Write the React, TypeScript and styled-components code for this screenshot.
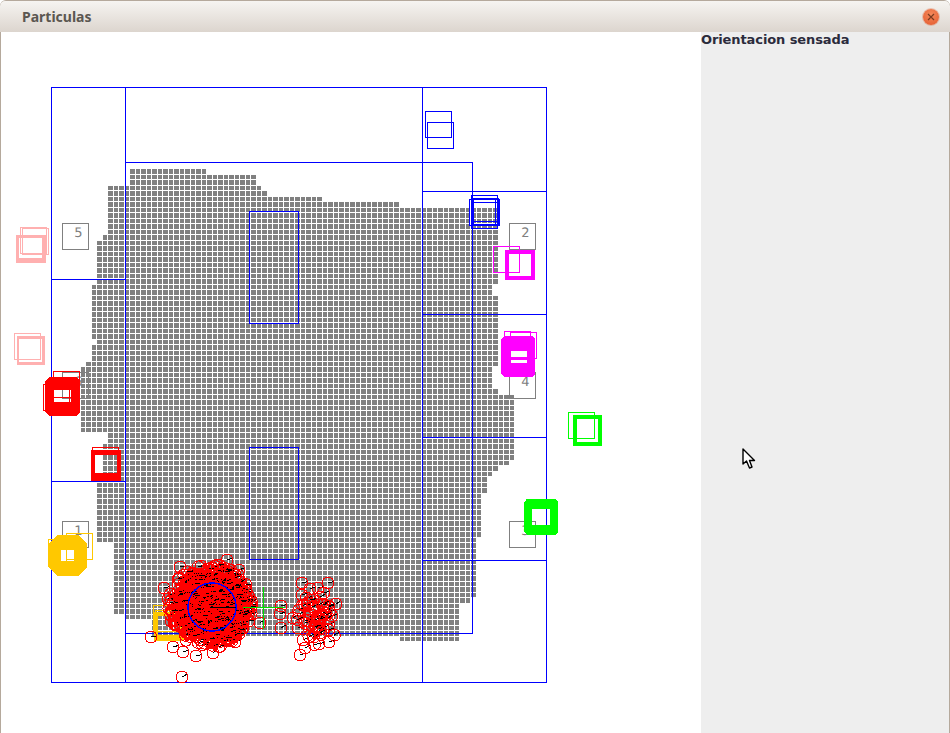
import React from 'react'
import styled, { createGlobalStyle } from 'styled-components'

const GlobalStyle = createGlobalStyle`
  html, body { margin: 0; padding: 0; background: #fff; }
`

const Win = styled.div`
  width: 950px;
  height: 733px;
  display: flex;
  flex-direction: column;
  overflow: hidden;
  position: relative;
  background: #b5a99c;
  border-radius: 6px 6px 0 0;
`
const TitleBar = styled.div`
  height: 31px;
  flex: 0 0 31px;
  margin-top: 1px;
  display: flex;
  align-items: center;
  justify-content: space-between;
  padding: 0 11px 0 22px;
  background: linear-gradient(#f6f4f1, #dcd5ce);
  border-radius: 5px 5px 0 0;
`
const Title = styled.span`
  font: bold 14px "Noto Sans", sans-serif;
  color: #5b5751;
`
const CloseBtn = styled.div`
  width: 16px;
  height: 16px;
  border-radius: 50%;
  background: radial-gradient(circle at 50% 35%, #f58a5c, #e2582c);
  box-shadow: 0 0 0 1px rgba(220, 110, 70, 0.35);
  display: flex;
  align-items: center;
  justify-content: center;
`
const Body = styled.div`
  flex: 1;
  display: flex;
  margin: 0 1px 0 1px;
  min-height: 0;
`
const CanvasPanel = styled.div`
  flex: 0 0 700px;
  background: #fff;
`
const SidePanel = styled.div`
  flex: 1;
  background: #eeeeee;
  position: relative;
`
const SideLabel = styled.div`
  font: bold 13px "DejaVu Sans", sans-serif;
  color: #2b2b3c;
  line-height: 15px;
  letter-spacing: -0.1px;
`
const Cursor = styled.svg`
  position: absolute;
  left: 41px;
  top: 416px;
`
const Drawing = styled.svg`
  display: block;
  shape-rendering: crispEdges;
`
const Outline = styled.rect<{ $c: string }>`
  fill: none;
  stroke: ${p => p.$c};
  stroke-width: 1;
`
const Wall = styled.line`
  stroke: #0000ff;
  stroke-width: 1;
`
const Cells = styled.path`
  fill: #808080;
`
const Band = styled.path<{ $c: string }>`
  fill: ${p => p.$c};
  fill-rule: evenodd;
`
const Tag = styled.text`
  font: 13px "DejaVu Sans", sans-serif;
  fill: #808080;
  text-anchor: middle;
  text-rendering: geometricPrecision;
`
const Particle = styled.circle`
  fill: none;
  stroke: #ff0000;
  stroke-width: 1;
`
const Heading = styled.line`
  stroke: #000;
  stroke-width: 1;
`
const Estimate = styled.circle`
  fill: none;
  stroke: #0000ff;
  stroke-width: 1.5;
`
const Cross = styled.line`
  stroke: #00e000;
  stroke-width: 1;
`

const BLUE = '#0000ff'
const MAGENTA = '#ff00ff'
const GREEN = '#00ff00'
const RED = '#ff0000'
const PINK = '#ffb0b0'
const YELLOW = '#ffc800'

// outline of the occupancy grid, clockwise from the top left
const outline: number[][] = [
  [108, 183], [132, 183], [132, 168], [187, 168], [188, 170], [205, 171], [222, 172], [240, 173], [255, 176], [258, 184],
  [264, 191], [272, 194], [282, 196], [310, 196], [318, 198], [332, 200], [346, 200], [400, 204], [446, 205], [470, 206],
  [495, 208], [499, 212], [499, 280], [494, 284], [494, 296], [501, 300], [501, 348], [496, 360], [494, 372], [494, 390],
  [502, 393], [510, 395], [517, 400], [517, 453], [514, 456], [507, 463], [497, 470], [490, 477], [487, 482], [484, 495],
  [484, 522], [480, 530], [478, 540], [478, 594], [473, 600], [460, 606], [460, 642], [405, 642], [400, 639], [150, 639],
  [150, 622], [138, 622], [130, 618], [115, 614], [115, 582], [111, 578], [111, 544], [95, 543], [95, 486], [98, 480],
  [103, 466], [103, 450], [106, 444], [106, 433], [82, 430], [79, 424], [79, 372], [85, 365], [90, 356], [93, 346],
  [95, 340], [93, 334], [93, 284], [96, 278], [99, 270], [99, 240], [106, 232], [108, 230],
]

const inside = (x: number, y: number) => {
  let hit = false
  for (let i = 0, j = outline.length - 1; i < outline.length; j = i++) {
    const [xi, yi] = outline[i]
    const [xj, yj] = outline[j]
    if (yi > y !== yj > y && x < ((xj - xi) * (y - yi)) / (yj - yi) + xi) hit = !hit
  }
  return hit
}

const cellPath = () => {
  let d = ''
  const pitch = 5.5
  const left = 108 - 6 * pitch
  for (let r = 0; r < 88; r++) {
    for (let c = 0; c < 84; c++) {
      const x0 = Math.round(left + c * pitch)
      const x1 = Math.round(left + (c + 1) * pitch) - 1
      const y0 = Math.round(169 + r * pitch)
      const y1 = Math.round(169 + (r + 1) * pitch) - 1
      if (inside(x0 + 2, y0 + 2)) d += `M${x0} ${y0}H${x1}V${y1}H${x0}Z`
    }
  }
  return d
}

// thick robot footprint: outer box with cut corners and rectangular holes
const band = (x0: number, y0: number, x1: number, y1: number, holes: number[][], cut = 0) =>
  `M${x0 + cut} ${y0}H${x1 - cut}L${x1} ${y0 + cut}V${y1 - cut}L${x1 - cut} ${y1}H${x0 + cut}L${x0} ${y1 - cut}V${y0 + cut}Z` +
  holes.map(([a, b, c, d]) => `M${a} ${b}H${c}V${d}H${a}Z`).join('')

const thin: [number, number, string][] = [
  [425.5, 111.5, BLUE], [427.5, 122.5, BLUE], [471.5, 195.5, BLUE], [469.5, 199.5, BLUE], [473.5, 199.5, BLUE], [471.5, 202.5, BLUE],
  [472.5, 198.5, BLUE],
  [493.5, 246.5, MAGENTA], [504.5, 331.5, MAGENTA], [510.5, 332.5, MAGENTA],
  [568.5, 412.5, GREEN], [526.5, 499.5, GREEN],
  [20.5, 227.5, PINK], [22.5, 228.5, PINK], [14.5, 333.5, PINK],
  [53.5, 371.5, RED], [43.5, 384.5, RED], [92.5, 447.5, RED], [93.5, 452.5, RED],
  [66.5, 533.5, YELLOW], [48.5, 539.5, YELLOW], [153.5, 605.5, YELLOW], [155.5, 610.5, YELLOW],
]

const bands: { d: string; c: string }[] = [
  { d: band(505, 250, 535, 280, [[509, 254, 531, 276]]), c: MAGENTA },
  { d: band(501, 336, 535, 377, [[511, 351, 527, 358], [511, 360, 527, 363]], 3), c: MAGENTA },
  { d: band(573, 415, 602, 446, [[577, 419, 598, 442]]), c: GREEN },
  { d: band(524, 499, 558, 535, [[532, 509, 550, 525]], 3), c: GREEN },
  { d: band(16, 235, 46, 263, [[19, 238, 42, 258]]), c: PINK },
  { d: band(17, 336, 45, 365, [[19, 339, 42, 362]]), c: PINK },
  { d: band(45, 377, 80, 416, [[54, 390, 71, 397], [54, 398, 71, 402]], 4), c: RED },
  { d: band(91, 450, 121, 481, [[95, 455, 117, 474]]), c: RED },
  { d: band(48, 535, 87, 576, [[61, 550, 66, 561], [67, 550, 74, 561]], 9), c: YELLOW },
  { d: band(154, 612, 184, 641, [[158, 616, 180, 635]]), c: YELLOW },
]

const tags: [number, number, string][] = [
  [62.5, 223.5, '5'], [509.5, 223.5, '2'], [509.5, 372.5, '4'], [509.5, 521.5, '3'], [62.5, 521.5, '1'], [62.5, 372.5, '6'],
]

const walls: number[][] = [
  [125.5, 87, 125.5, 683], [422.5, 87, 422.5, 683], [125, 162.5, 473, 162.5], [472.5, 162, 472.5, 634], [125, 633.5, 473, 633.5],
  [422, 191.5, 547, 191.5], [422, 314.5, 547, 314.5], [422, 437.5, 547, 437.5], [422, 560.5, 547, 560.5],
  [51, 279.5, 126, 279.5], [51, 481.5, 126, 481.5],
]

const strays: number[][] = [
  [180, 567], [227, 560], [201, 566], [217, 565], [239, 570], [164, 588], [151, 637], [182, 677], [173, 647], [183, 652], [196, 656],
  [213, 653], [235, 642], [227, 639], [260, 623], [248, 595], [247, 603], [243, 628], [168, 599], [175, 620],
  [281, 606], [280, 614], [281, 628], [302, 583], [328, 583], [318, 588], [310, 589], [336, 604], [300, 655], [329, 642], [319, 644],
  [305, 648], [293, 618], [299, 614], [332, 616], [298, 628], [303, 640], [302, 595],
]

const makeParticles = () => {
  let seed = 1234
  const rnd = () => {
    seed = (seed * 16807) % 2147483647
    return seed / 2147483647
  }
  const gauss = () => (rnd() + rnd() + rnd() + rnd() - 2) * 1.7
  const list = strays.map(([x, y]) => ({ x, y, a: -0.15 - rnd() * 0.5 }))
  for (let i = 0; i < 1300; i++) {
    const x = 210 + gauss() * 19
    const y = 606 + gauss() * 19
    if (Math.hypot(x - 210, y - 606) < 42) list.push({ x, y, a: -0.05 - rnd() * 0.2 })
  }
  for (let i = 0; i < 55; i++) {
    const x = 318 + gauss() * 9
    const y = 617 + gauss() * 14
    list.push({ x, y, a: -0.1 - rnd() * 0.5 })
  }
  return list
}

const cells = cellPath()
const particles = makeParticles()

function App() {
  return (
    <React.Fragment>
      <GlobalStyle />
      <Win>
        <TitleBar>
          <Title>Particulas</Title>
          <CloseBtn>
            <svg width="8" height="8" viewBox="0 0 8 8">
              <path d="M1 1L7 7M7 1L1 7" stroke="#7a3a20" strokeWidth="1.2" />
            </svg>
          </CloseBtn>
        </TitleBar>
        <Body>
          <CanvasPanel>
            <Drawing width="700" height="701" viewBox="1 32 700 701">
              <Cells d={cells} />
              <Outline $c={BLUE} x={51.5} y={87.5} width={495} height={595} />
              {walls.map((w, i) => (
                <Wall key={i} x1={w[0]} y1={w[1]} x2={w[2]} y2={w[3]} />
              ))}
              <Outline $c={BLUE} x={249.5} y={211.5} width={49} height={112} />
              <Outline $c={BLUE} x={249.5} y={447.5} width={49} height={112} />
              {tags.map(([x, y, t]) => (
                <g key={t}>
                  <Outline $c="#808080" x={x} y={y} width={26} height={26} />
                  <Tag x={x + 16} y={y + 13}>{t}</Tag>
                </g>
              ))}
              {thin.map(([x, y, c], i) => (
                <Outline key={i} $c={c} x={x} y={y} width={26} height={26} />
              ))}
              {bands.map((b, i) => (
                <Band key={i} $c={b.c} d={b.d} />
              ))}
              {particles.map((p, i) => (
                <g key={i}>
                  <Heading x1={p.x} y1={p.y} x2={p.x + 6 * Math.cos(p.a)} y2={p.y + 6 * Math.sin(p.a)} />
                  <Particle cx={p.x} cy={p.y} r={6} />
                </g>
              ))}
              <Estimate cx={212} cy={607} r={24} />
              <Heading x1={212} y1={607.5} x2={236} y2={607.5} />
              <Cross x1={243} y1={607.5} x2={285} y2={607.5} />
              <Cross x1={263.5} y1={587} x2={263.5} y2={629} />
            </Drawing>
          </CanvasPanel>
          <SidePanel>
            <SideLabel>Orientacion sensada</SideLabel>
            <Cursor width="14" height="22" viewBox="0 0 14 22">
              <path d="M1 1V16L4.5 13L7.5 20L10 19L7.5 12.5H12.5Z" fill="#fff" stroke="#000" strokeWidth="1.4" strokeLinejoin="round" />
            </Cursor>
          </SidePanel>
        </Body>
      </Win>
    </React.Fragment>
  )
}

export default App
